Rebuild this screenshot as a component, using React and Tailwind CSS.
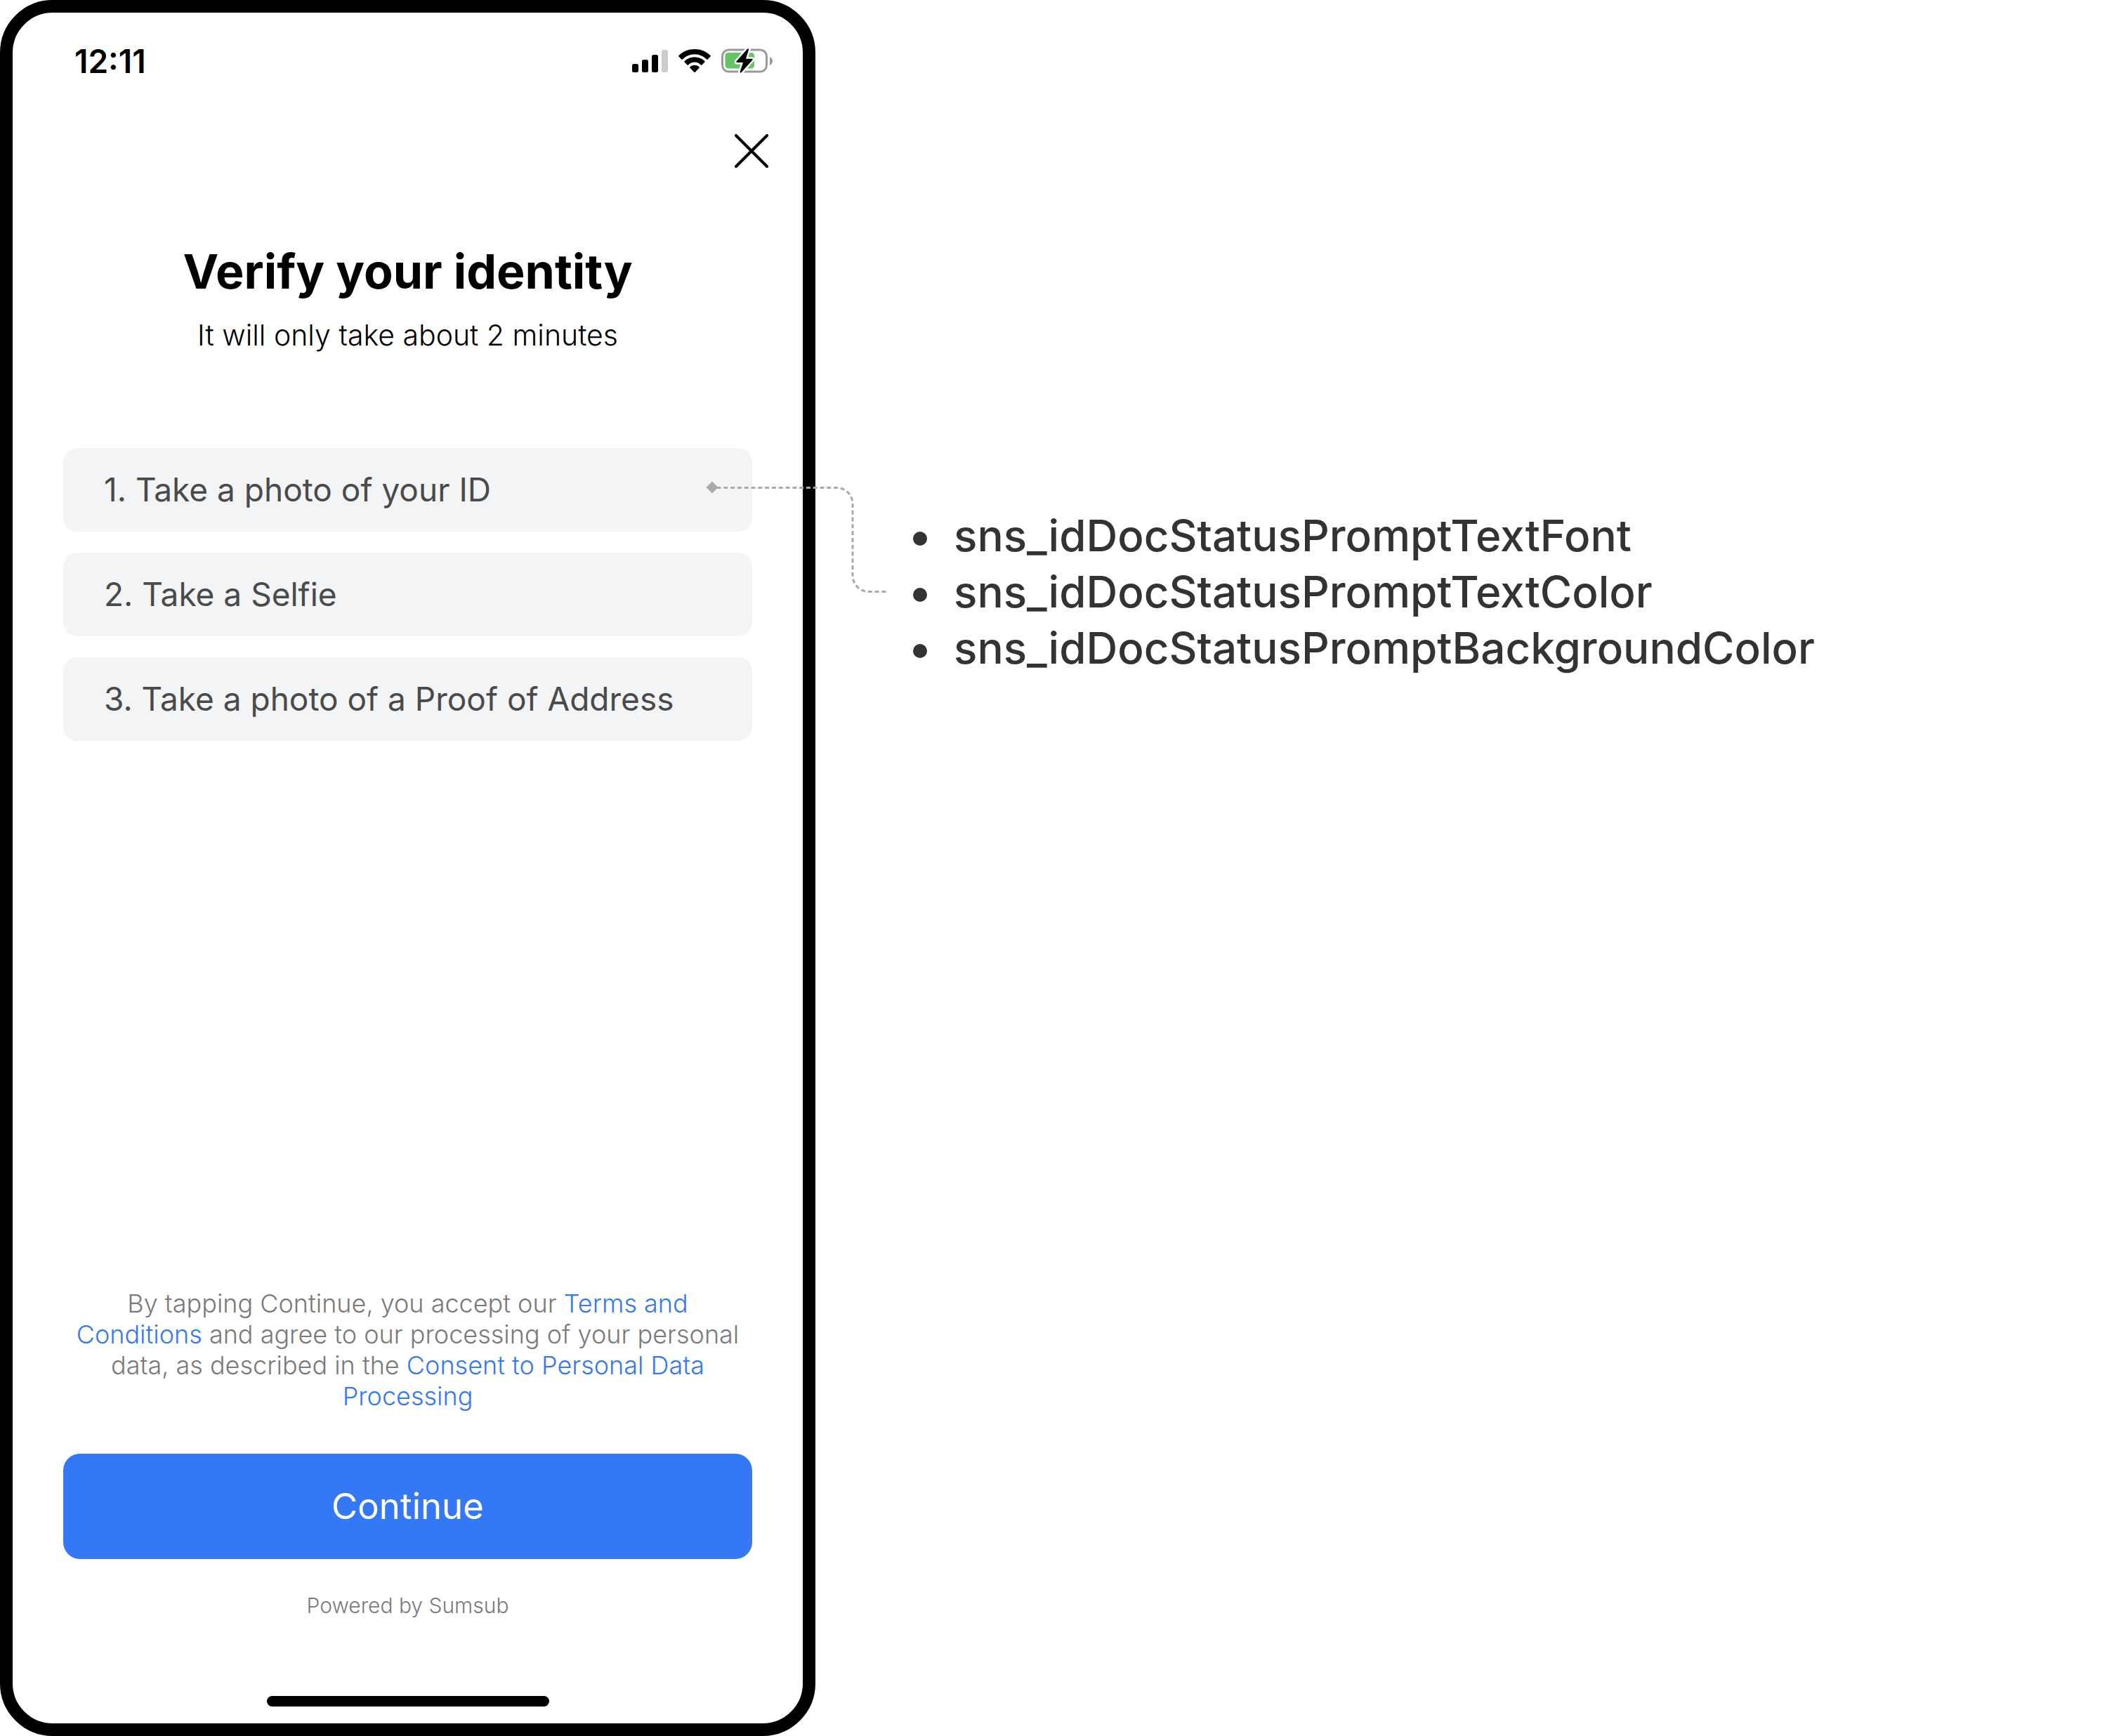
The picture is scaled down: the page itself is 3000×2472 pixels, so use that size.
const steps = [
  "1. Take a photo of your ID",
  "2. Take a Selfie",
  "3. Take a photo of a Proof of Address",
];

const properties = [
  "sns_idDocStatusPromptTextFont",
  "sns_idDocStatusPromptTextColor",
  "sns_idDocStatusPromptBackgroundColor",
];

function SignalIcon() {
  return (
    <svg width="51" height="34" viewBox="0 0 51 34" aria-hidden="true">
      <rect x="0" y="21" width="9" height="12" rx="2.5" />
      <rect x="14" y="15" width="9" height="18" rx="2.5" />
      <rect x="28" y="8" width="9" height="25" rx="2.5" />
      <rect x="42" y="1" width="9" height="32" rx="2.5" fill="#cccccc" />
    </svg>
  );
}

function WifiIcon() {
  return (
    <svg width="46" height="34" viewBox="0 0 46 34" aria-hidden="true">
      <path d="M23 0C14.4 0 6.500 3.300 0.500 8.900a1 1 0 0 0 0 1.500l3.900 4a1 1 0 0 0 1.400 0C10.300 10.100 16.300 7.200 23 7.200s12.700 2.900 17.200 7.200a1 1 0 0 0 1.400 0l3.900-4a1 1 0 0 0 0-1.500C39.500 3.300 31.600 0 23 0Z" />
      <path d="M23 11.300c-5.500 0-10.500 2.100-14.300 5.600a1 1 0 0 0 0 1.500l3.900 4a1 1 0 0 0 1.400 0c2.400-2.300 5.500-3.900 9-3.900s6.600 1.600 9 3.900a1 1 0 0 0 1.400 0l3.900-4a1 1 0 0 0 0-1.500C33.500 13.400 28.500 11.300 23 11.300Z" />
      <path d="M23 22.800c-2.500 0-4.800.9-6.500 2.500a1 1 0 0 0 0 1.500l5.800 5.900a1 1 0 0 0 1.400 0l5.800-5.900a1 1 0 0 0 0-1.500c-1.700-1.600-4-2.500-6.500-2.500Z" />
    </svg>
  );
}

function BatteryIcon() {
  return (
    <svg width="73" height="36" viewBox="0 0 73 36" aria-hidden="true">
      <rect x="1.500" y="2" width="63" height="31" rx="9" fill="none" stroke="#9b9b9b" strokeWidth="3" />
      <path d="M69 12v12c2.500-1.100 4-3.400 4-6s-1.500-4.900-4-6Z" fill="#9b9b9b" />
      <rect x="5.500" y="6" width="41.500" height="22.500" rx="4.500" fill="#65c466" />
      <path
        d="M37 0.800 21.600 18.300c-.7.900-.2 1.700.8 1.700h8.600l-4.300 13c-.5 1.500 1 2.300 2 1.100L44.400 16.400c.7-.9.200-1.700-.8-1.700H35l4-12.800C39.400.4 38-.4 37 .8Z"
        fill="#000"
        stroke="#fff"
        strokeWidth="5"
        strokeLinejoin="round"
        paintOrder="stroke"
      />
    </svg>
  );
}

function Connector() {
  return (
    <svg
      className="pointer-events-none absolute left-full top-[42px] z-10 -ml-[71px]"
      width="270"
      height="180"
      viewBox="0 0 270 180"
      fill="none"
      aria-hidden="true"
    >
      <path d="M14 5.500 22.500 14 14 22.500 5.500 14Z" fill="#aaaaaa" />
      <path
        d="M20.500 14.500H191a23 23 0 0 1 23 23V139.500a23 23 0 0 0 23 23H263.500"
        stroke="#aaaaaa"
        strokeWidth="3"
        strokeDasharray="6 3.800"
      />
    </svg>
  );
}

function Phone() {
  return (
    <section className="flex min-h-screen w-[38.7%] shrink-0 flex-col rounded-[75px] border-[18px] border-black bg-white px-[72px]">
      <header className="-mr-[29px] flex flex-col">
        <div className="flex items-center justify-between pl-[16px] pt-[41px]">
          <time className="text-[46px] font-semibold leading-[56px]">12:11</time>
          <div className="flex items-center gap-[15px]">
            <SignalIcon />
            <WifiIcon />
            <BatteryIcon />
          </div>
        </div>
        <button type="button" aria-label="Close" className="mr-[6px] mt-[76px] self-end">
          <svg width="48" height="48" viewBox="0 0 48 48" fill="none" stroke="#000" strokeWidth="4" strokeLinecap="round" aria-hidden="true">
            <path d="M2 2 46 46M46 2 2 46" />
          </svg>
        </button>
      </header>

      <div className="mt-[107px] text-center">
        <h1 className="text-[68px] font-bold leading-[80px]">Verify your identity</h1>
        <p className="mt-[25px] text-[41px] font-light leading-[52px]">It will only take about 2 minutes</p>
      </div>

      <ol className="mt-[135px] flex flex-col gap-[30px]">
        {steps.map((step, i) => (
          <li key={step} className="relative rounded-[20px] bg-[#f3f4f6] px-[58px] pb-[30px] pt-[29px] text-[46px] leading-[60px] text-[#4a4a4a]">
            {step}
            {i === 0 && <Connector />}
          </li>
        ))}
      </ol>

      <footer className="mt-auto flex flex-col items-center pb-[24px] text-center">
        <p className="text-[36px] font-light leading-[44px] text-[#7a7a7a]">
          By tapping Continue, you accept our{" "}
          <a href="#terms" className="text-[#3478f6]">Terms and Conditions</a> and agree to our processing of your
          personal data, as described in the{" "}
          <a href="#consent" className="text-[#3478f6]">Consent to Personal Data Processing</a>
        </p>
        <button type="button" className="mt-[60px] w-full rounded-[24px] bg-[#3478f6] py-[43px] text-[51px] leading-[64px] text-white">
          Continue
        </button>
        <p className="mt-[47px] text-[30px] font-light leading-[38px] text-[#7a7a7a]">Powered by Sumsub</p>
        <div className="mt-[110px] h-[15px] w-[402px] rounded-full bg-black" />
      </footer>
    </section>
  );
}

export default function App() {
  return (
    <main className="flex min-h-screen items-start bg-white font-['Inter',sans-serif] text-black">
      <Phone />
      <ul className="ml-[139px] mt-[723px] text-[62px] font-medium leading-[80px] text-[#333333]">
        {properties.map((name) => (
          <li key={name} className="flex items-center gap-[38px] before:mt-[8px] before:size-[20px] before:rounded-full before:bg-[#333333]">
            {name}
          </li>
        ))}
      </ul>
    </main>
  );
}
